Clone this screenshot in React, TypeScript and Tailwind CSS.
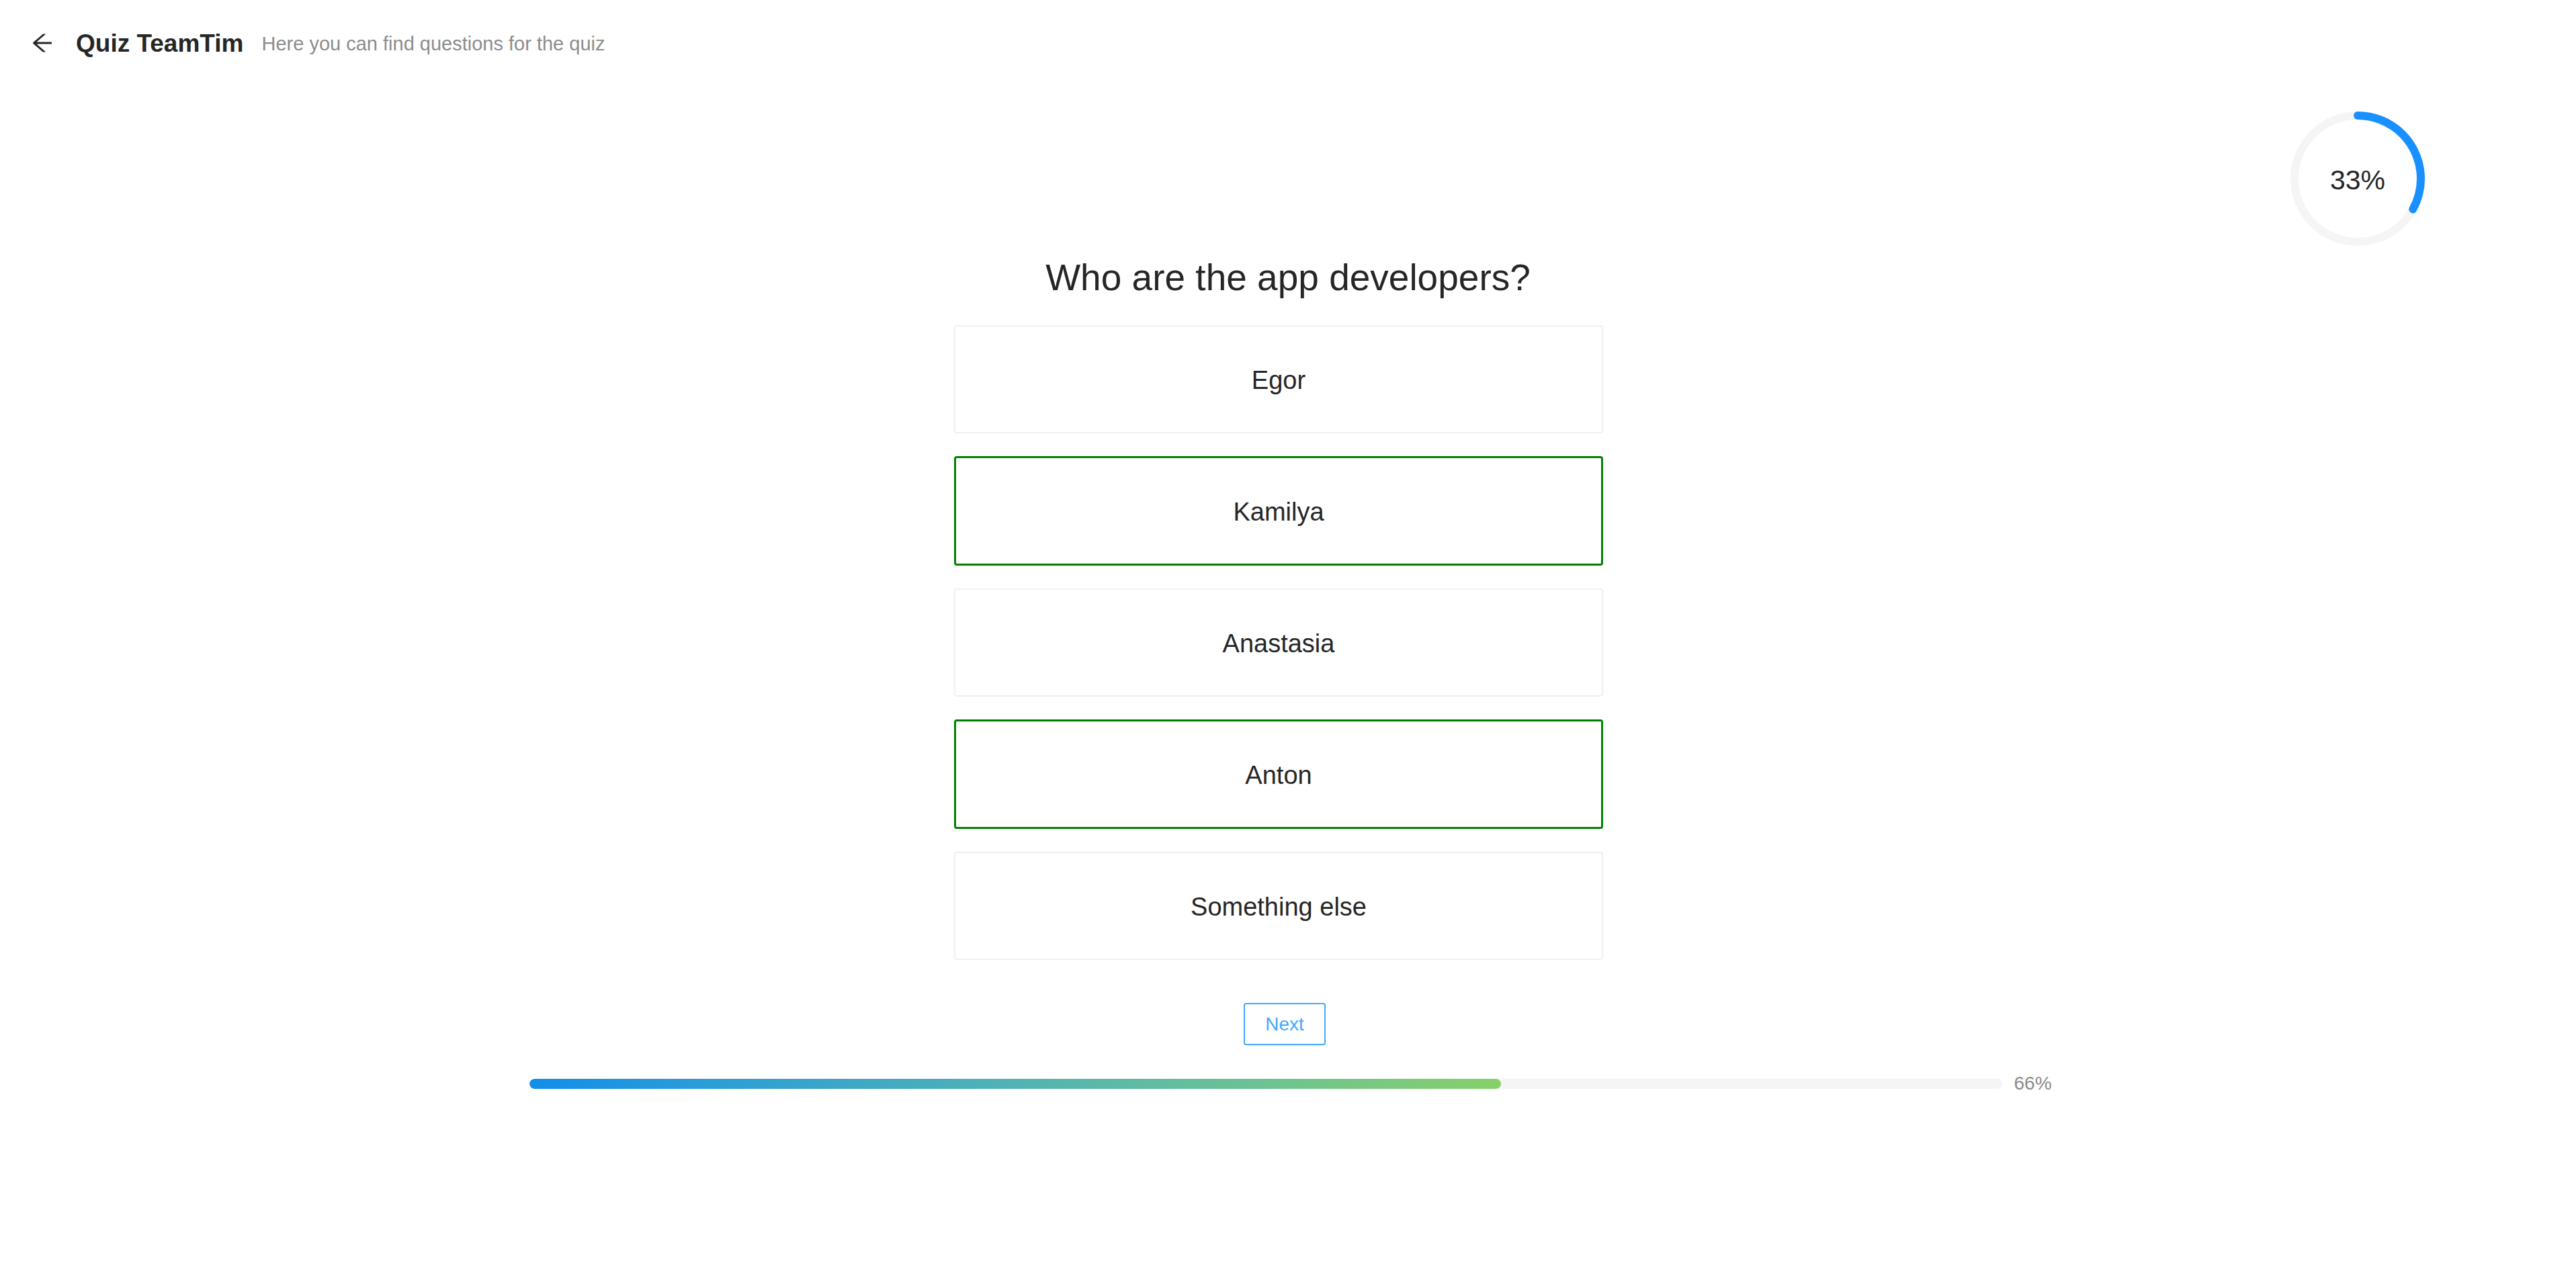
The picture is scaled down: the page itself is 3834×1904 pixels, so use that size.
import React from 'react';

const options = [
  { id: 1, label: 'Egor', selected: false },
  { id: 2, label: 'Kamilya', selected: true },
  { id: 3, label: 'Anastasia', selected: false },
  { id: 4, label: 'Anton', selected: true },
  { id: 5, label: 'Something else', selected: false },
];

function ArrowLeft() {
  return (
    <svg width="34" height="34" viewBox="64 64 896 896" fill="#262626">
      <path d="M872 474H286.9l350.2-304c5.6-4.9 2.2-14-5.2-14h-88.5c-3.9 0-7.6 1.4-10.5 3.9L155 487.8a31.96 31.96 0 000 48.3L535.1 866c1.5 1.3 3.3 2 5.2 2h91.5c7.4 0 10.8-9.2 5.2-14L286.9 550H872c4.4 0 8-3.6 8-8v-60c0-4.4-3.6-8-8-8z" />
    </svg>
  );
}

function CircleProgress({ percent }: { percent: number }) {
  const r = 94;
  const c = 2 * Math.PI * r;
  return (
    <div className="relative w-[200px] h-[200px]">
      <svg width="200" height="200" viewBox="0 0 200 200" className="-rotate-90">
        <circle cx="100" cy="100" r={r} fill="none" stroke="#f5f5f5" strokeWidth="12" />
        <circle
          cx="100"
          cy="100"
          r={r}
          fill="none"
          stroke="#1890ff"
          strokeWidth="12"
          strokeLinecap="round"
          strokeDasharray={`${(c * percent) / 100} ${c}`}
        />
      </svg>
      <div className="absolute inset-0 pt-[6px] flex items-center justify-center text-[41px] text-[#262626]">
        {percent}%
      </div>
    </div>
  );
}

export default function App() {
  return (
    <div className="min-h-screen bg-white font-['Liberation_Sans',Arial,sans-serif]">
      {/* page header */}
      <div className="flex items-center h-[128px] pl-[46px]">
        <button className="flex items-center">
          <ArrowLeft />
        </button>
        <h1 className="ml-[33px] text-[37px] font-bold text-[#262626] leading-none">Quiz TeamTim</h1>
        <span className="ml-[27px] pt-[2px] text-[29px] text-[#8c8c8c] leading-none">Here you can find questions for the quiz</span>
      </div>

      <div className="flex justify-end pr-[225px] mt-[38px]">
        <CircleProgress percent={33} />
      </div>

      <div className="flex flex-col items-center">
        <h2 className="mt-[15px] text-[55px] leading-[64px] text-[#262626]">Who are the app developers?</h2>

        <div className="mt-[39px] mr-[28px] w-[966px] flex flex-col gap-[34px]">
          {options.map((o) => (
            <div
              key={o.id}
              className={
                o.selected
                  ? 'h-[163px] pt-[3px] flex items-center justify-center rounded-[4px] border-[3px] border-[#008000] text-[38px] text-[#262626]'
                  : 'h-[161px] pt-[3px] flex items-center justify-center rounded-[4px] border-2 border-[#f0f0f0] text-[38px] text-[#262626]'
              }
            >
              {o.label}
            </div>
          ))}
        </div>

        <button className="mt-[64px] mr-[10px] w-[122px] h-[63px] rounded-[4px] border-2 border-[#40a9ff] text-[28px] text-[#40a9ff]">
          Next
        </button>

        <div className="mt-[36px] ml-[10px] w-[2269px] h-[42px] flex items-center gap-[18px]">
          <div className="w-[2192px] h-[15px] rounded-full bg-[#f5f5f5] overflow-hidden">
            <div
              className="h-full rounded-full bg-gradient-to-r from-[#108ee9] to-[#87d068]"
              style={{ width: '66%' }}
            />
          </div>
          <span className="text-[28px] text-[#8c8c8c] leading-none">66%</span>
        </div>
      </div>
    </div>
  );
}
